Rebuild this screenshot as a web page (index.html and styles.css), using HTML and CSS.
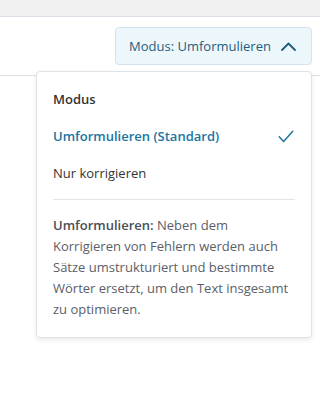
FILE: index.html
```html
<!DOCTYPE html>
<html lang="de">
<head>
<meta charset="utf-8">
<link rel="stylesheet" href="styles.css">
</head>
<body>
<div class="topbar"></div>
<div class="toolbar">
  <button class="mode-btn" type="button">
    <span class="mode-label">Modus: Umformulieren</span>
    <svg class="chevron" width="15" height="9" viewBox="0 0 15 9"><path d="M1 8 L7.5 1.5 L14 8" fill="none" stroke="currentColor" stroke-width="1.8" stroke-linecap="round" stroke-linejoin="round"/></svg>
  </button>
</div>
<div class="dropdown">
  <div class="row heading">Modus</div>
  <div class="row option selected">
    <span>Umformulieren (Standard)</span>
    <svg class="check" width="16" height="13" viewBox="0 0 16 13"><path d="M1.2 6.8 L5.6 11.4 L14.8 1.2" fill="none" stroke="currentColor" stroke-width="1.5" stroke-linecap="round" stroke-linejoin="round"/></svg>
  </div>
  <div class="row option">Nur korrigieren</div>
  <div class="sep"></div>
  <p class="desc"><strong>Umformulieren:</strong> Neben dem Korrigieren von Fehlern werden auch Sätze umstrukturiert und bestimmte Wörter ersetzt, um den Text insgesamt zu optimieren.</p>
</div>
</body>
</html>
```

FILE: styles.css
```css
html, body {
  margin: 0;
  padding: 0;
  background: #ffffff;
}
body {
  width: 320px;
  height: 411px;
  overflow: hidden;
  position: relative;
  font-family: "Open Sans", "Noto Sans", sans-serif;
  font-size: 13px;
  color: #333;
}
.topbar {
  height: 16px;
  background: #f0f0f0;
  border-bottom: 1px solid #dde1e7;
}
.toolbar {
  height: 59px;
  border-bottom: 1px solid #dde1e7;
  display: flex;
  justify-content: flex-end;
  align-items: flex-start;
  padding: 10px 8px 0 0;
  box-sizing: border-box;
}
.mode-btn {
  height: 38px;
  width: 197px;
  box-sizing: border-box;
  display: flex;
  align-items: center;
  justify-content: space-between;
  padding: 0 15px 0 13px;
  background: #ecf7fc;
  border: 1px solid #d3e4ec;
  border-radius: 4px;
  color: #1e5d7e;
  font-family: "Open Sans", "Noto Sans", sans-serif;
  font-size: 13px;
  white-space: nowrap;
}
.mode-label {
  white-space: nowrap;
}
.chevron {
  display: block;
  flex: none;
  color: #1e5d7e;
}
.dropdown {
  position: absolute;
  top: 71px;
  left: 36px;
  width: 276px;
  height: 267px;
  box-sizing: border-box;
  background: #fff;
  border: 1px solid #dfe2e6;
  border-radius: 4px;
  box-shadow: 0 2px 5px rgba(0, 0, 0, 0.09);
  padding: 8.5px 16px 16px 16px;
}
.row {
  height: 37px;
  display: flex;
  align-items: center;
  justify-content: space-between;
}
.heading {
  font-weight: 600;
  color: #333;
}
.option {
  color: #333;
}
.option.selected {
  color: #1a74a1;
  font-weight: 600;
}
.check {
  display: block;
  margin-right: 1px;
  color: #1a74a1;
}
.sep {
  height: 1px;
  background: #e1e4e8;
  margin: 7px 0 0 0;
}
.desc {
  margin: 15px 0 0 0;
  line-height: 21px;
  color: #5b6068;
}
.desc strong {
  font-weight: 600;
  color: #4a4f56;
}
```
